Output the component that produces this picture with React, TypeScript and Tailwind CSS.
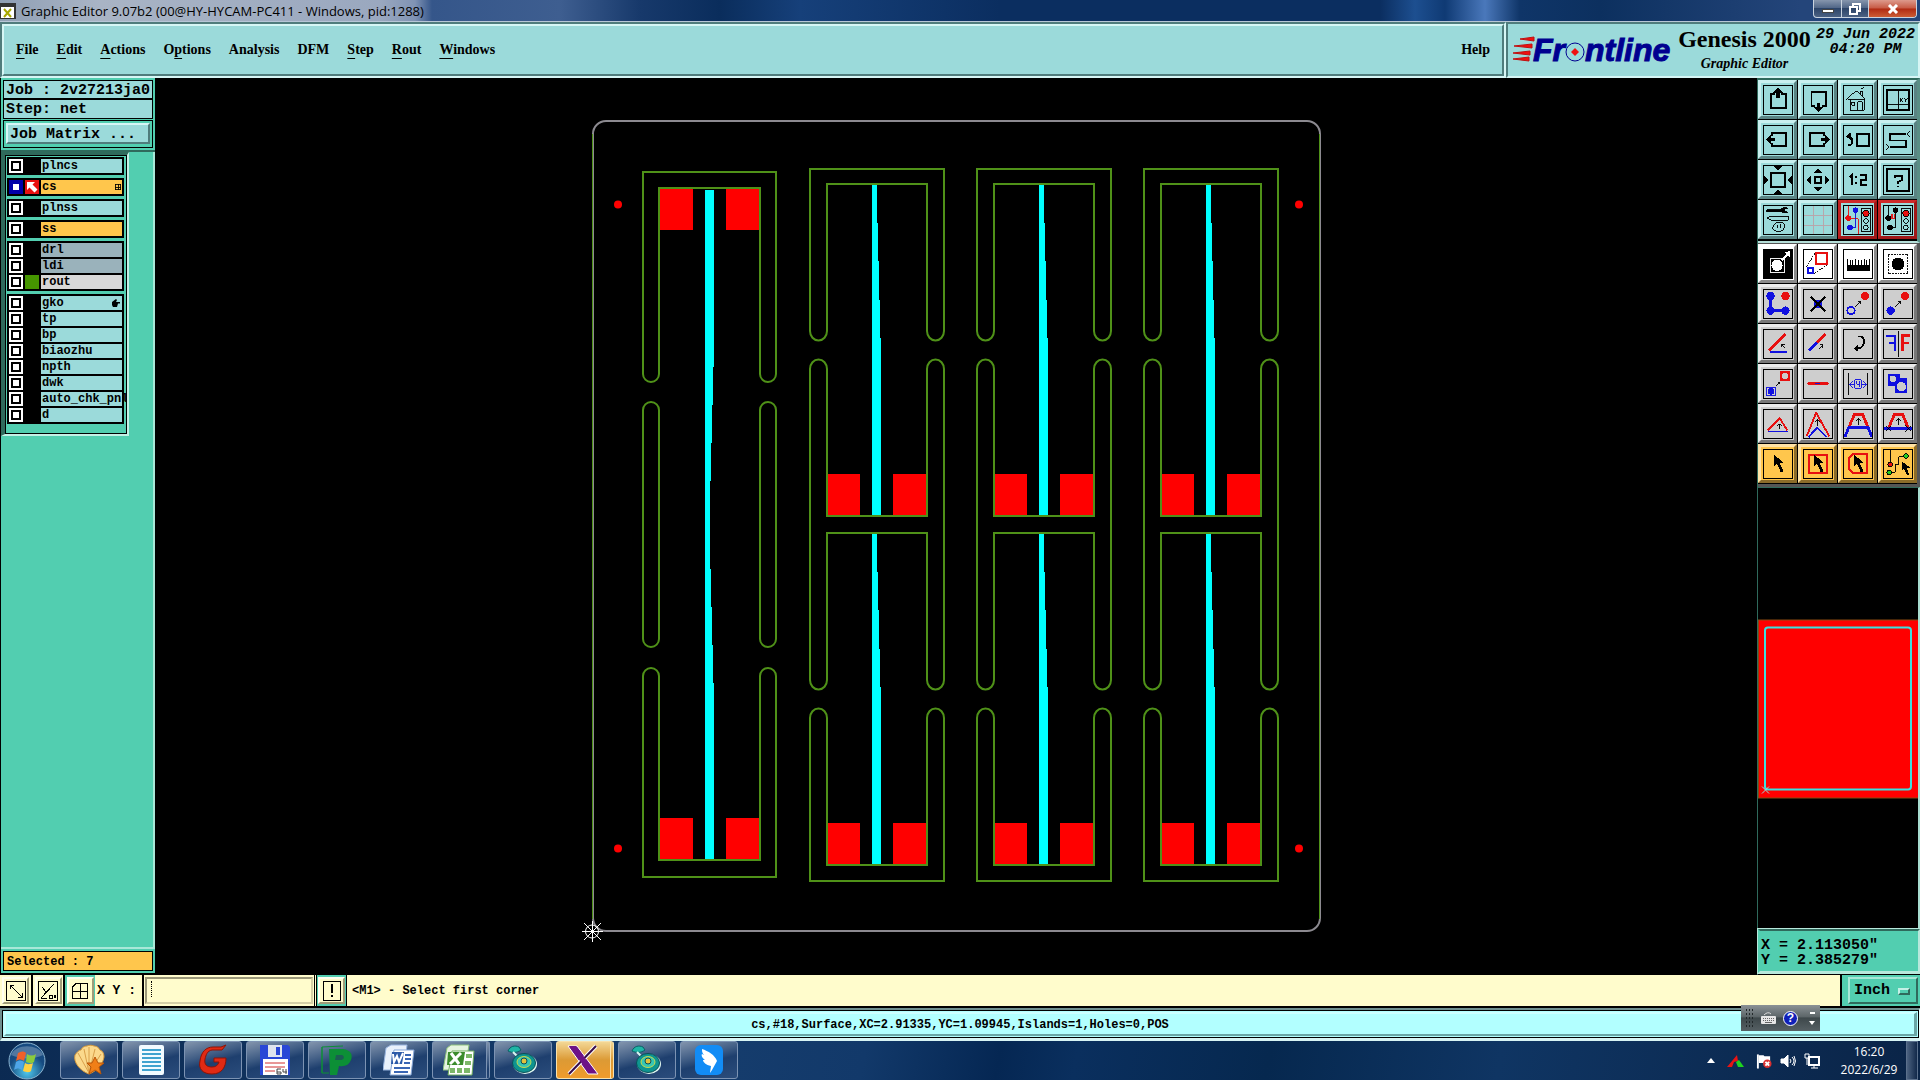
import React from "react";

const MONO = "font-['Liberation_Mono',monospace]";
const SERIF = "font-['Liberation_Serif',serif]";

/* ---------- tool icons, drawn on a 30 x 30 grid ---------- */

const K = "#000";
const R = "#e81010";
const B = "#1010e0";

function Lights() {
  return (
    <>
      <rect x="18.5" y="2.500" width="10" height="25" fill="none" stroke={K} />
      <circle cx="23.500" cy="8" r="3.500" fill={R} stroke={K} />
      <circle cx="23.500" cy="16" r="2.500" fill="none" stroke={K} />
      <circle cx="23.500" cy="23" r="2.500" fill="none" stroke={K} />
    </>
  );
}

const Cursor = () => <path d="M11 5v12l3-2 4 9 3-1-4-9h4z" fill={K} />;

type Tool = { name: string; tone: string; art: React.ReactNode };

const viewTools: Tool[] = [
  { name: "Pan up", tone: "teal", art: <><path d="M12 8.500H7.500v15h16v-15H18" fill="none" stroke={K} strokeWidth="2" /><path d="M15 2l6 6h-4v5h-4V8H9z" /></> },
  { name: "Pan down", tone: "teal", art: <><path d="M12 21.500H8v-15h15.500v15H19" fill="none" stroke={K} strokeWidth="2" /><path d="M15.500 28l6-6h-4v-4h-4v4h-4z" /></> },
  { name: "Home", tone: "teal", art: <path d="M2.500 14.500L13 5l10 9.500M4.500 14.500h18M6.500 14v12h15V14M8.500 17.500h3v3h-3zM14.500 26v-9h5v9M19.500 17v9M17.500 9V5.500h2V11M18 3l3-1" fill="none" stroke={K} /> },
  { name: "Zoom window", tone: "teal", art: <><rect x="3.500" y="4" width="23" height="22" fill="none" stroke={K} strokeWidth="2" /><path d="M15.500 4v22M4 19.500h23" stroke={K} /><path d="M17 13l3 4m0-4l-3 4M22 13l1.500 2L25 13M23.500 15v2" stroke={K} fill="none" /></> },
  { name: "Pan left", tone: "teal", art: <><path d="M9 11V7.500h15v14H9V18" fill="none" stroke={K} strokeWidth="2" /><path d="M2 14.500l6-6v4h4v4H8v4z" /></> },
  { name: "Pan right", tone: "teal", art: <><path d="M21 11V7.500H6v14h15V18" fill="none" stroke={K} strokeWidth="2" /><path d="M28 14.500l-6-6v4h-4v4h4v4z" /></> },
  { name: "Previous view", tone: "teal", art: <><rect x="14" y="8.500" width="12.500" height="13" fill="none" stroke={K} strokeWidth="2" /><path d="M4 20h3c3-1 3-8-2-9" fill="none" stroke={K} strokeWidth="2" /><path d="M2 11l5-4v8z" /></> },
  { name: "Serpentine", tone: "teal", art: <><path d="M24 8.500H6v7h18v7H6" fill="none" stroke={K} strokeWidth="2" /><path d="M28 5l-3 3.500L28 12M2 19l3 3.500L2 26" fill="none" stroke={K} /></> },
  { name: "Zoom in", tone: "teal", art: <><rect x="7.500" y="7.500" width="15" height="15" fill="none" stroke={K} strokeWidth="2" /><path d="M10 0h10l-5 5zM10 30h10l-5-5zM0 10v10l5-5zM30 10v10l-5-5z" /></> },
  { name: "Zoom out", tone: "teal", art: <><rect x="11.500" y="11.500" width="7" height="7" fill="none" stroke={K} strokeWidth="2" /><path d="M10 8h10l-5-5zM10 22h10l-5 5zM8 10v10l-5-5zM22 10v10l5-5z" /></> },
  { name: "Scale 1:2", tone: "teal", art: <path d="M6 12l3-3v11M12 12h2M12 18h2M17 10h7v5h-6v5h7" fill="none" stroke={K} strokeWidth="2" /> },
  { name: "Query", tone: "teal", art: <><rect x="3.500" y="3.500" width="23" height="23" fill="none" stroke={K} strokeWidth="2" /><path d="M12 13v-2h7v4l-4 2v2M15 21v2" fill="none" stroke={K} strokeWidth="2" /></> },
  { name: "Settings", tone: "teal", art: <><path d="M3 4h15v2H3zM18 3l3-1h4v1h-3v3h3v1h-4l-3-1z" stroke={K} /><path d="M3 13l4-2h19v4H7z" fill="none" stroke={K} /><path d="M10 21c3-5 11-4 12-1 1 5-4 8-8 7-5-1-5-3-4-6zM14 20v4M18 19l-1 5" fill="none" stroke={K} /></> },
  { name: "Grid", tone: "teal", art: <path d="M10.500 0v30M20.500 0v30M0 10.500h30M0 20.500h30" stroke="#b9a3a8" /> },
  { name: "Snap nets", tone: "alert", art: <><path d="M4.500 0v13M4 13.500h11v16" stroke={R} fill="none" /><circle cx="4.500" cy="13" r="3" fill={R} /><path d="M12.500 4v19H7" fill="none" stroke={B} /><circle cx="6.500" cy="23" r="3" fill={B} /><circle cx="12.500" cy="4.500" r="3" fill={B} /><Lights /></> },
  { name: "Snap pads", tone: "alert", art: <><path d="M4.500 0v13M12.500 4v19H7" fill="none" stroke={K} /><circle cx="4.500" cy="13" r="3" /><circle cx="6.500" cy="23" r="3" /><circle cx="12.500" cy="4.500" r="3" /><path d="M7 13.500h5M7.500 9v4M9.500 9v4M11.500 9v4" stroke={R} /><Lights /></> },
];

const editTools: Tool[] = [
  { name: "Transform", tone: "white", art: <><rect width="30" height="30" /><rect x="6.500" y="9.500" width="15" height="15" fill="none" stroke="#fff" /><circle cx="14" cy="16.500" r="6" fill="#fff" /><path d="M18 10l6-6-3-1 7-2v7l-2-2-6 6z" fill="#fff" /></> },
  { name: "Resize", tone: "white", art: <><rect x="13" y="3" width="12" height="12" fill="none" stroke={R} strokeWidth="2" /><rect x="4" y="19" width="6" height="6" fill="none" stroke={B} strokeWidth="2" /><path d="M3 18L12 3M11 25l14-9" stroke={K} strokeDasharray="2 1" /></> },
  { name: "Measure", tone: "white", art: <path d="M3 10h1v6h2v-5h1v5h2v-5h1v5h2v-6h1v6h2v-5h1v5h2v-5h1v5h2v-6h1v6h2v-5h1v5h2v-6h1v12H3z" /> },
  { name: "Pad", tone: "white", art: <><rect x="4.500" y="4.500" width="21" height="21" fill="none" stroke={K} strokeDasharray="2 1" /><circle cx="15" cy="15" r="7" /></> },
  { name: "Connect", tone: "gray", art: <><path d="M7 6v16h17" stroke={B} strokeWidth="3" fill="none" /><circle cx="7" cy="6.500" r="4.500" fill={B} /><circle cx="7" cy="22" r="4.500" fill={B} /><circle cx="23" cy="22" r="4.500" fill={B} /><circle cx="23" cy="6.500" r="4.500" fill={R} /></> },
  { name: "Delete", tone: "gray", art: <><circle cx="15" cy="15" r="4.500" fill={B} /><path d="M7 7l16 16M23 7L7 23" stroke={K} strokeWidth="2" /></> },
  { name: "Move pad", tone: "gray", art: <><circle cx="7.500" cy="22" r="4" fill="none" stroke={B} strokeWidth="2" /><circle cx="22.500" cy="6.500" r="4.500" fill={R} /><path d="M12 18l6-6M15 12h3v3" stroke={K} fill="none" /></> },
  { name: "Copy pad", tone: "gray", art: <><circle cx="7" cy="22" r="4.500" fill={B} /><circle cx="22.500" cy="6.500" r="4.500" fill={R} /><path d="M12 18l6-6M15 12h3v3" stroke={K} fill="none" /></> },
  { name: "Angle", tone: "gray", art: <><path d="M5 22L23 4" stroke={R} strokeWidth="3" /><path d="M6 24h19" stroke={B} strokeWidth="2" /><path d="M22 19l-3-4M19 18v-3h3" stroke={K} fill="none" /></> },
  { name: "Line", tone: "gray", art: <><path d="M5 22l9-9" stroke={B} strokeWidth="3" /><path d="M14 13l9-9" stroke={R} strokeWidth="3" /><path d="M16 20l4-4M17 16h3v3" stroke={K} fill="none" /></> },
  { name: "Rotate", tone: "gray", art: <><path d="M15 7h3c5 2 5 11-3 13h-3" fill="none" stroke={K} strokeWidth="2" /><path d="M10 20l5-4v7z" /></> },
  { name: "Mirror", tone: "gray", art: <><path d="M15.500 1v28" stroke={K} /><path d="M2 6h10v17M12 14H5" fill="none" stroke={B} strokeWidth="2" /><path d="M28 6h-8v17M20 14h7" fill="none" stroke={R} strokeWidth="3" /></> },
  { name: "Substitute", tone: "gray", art: <><rect x="2.500" y="18.500" width="10" height="9" fill="none" stroke={B} /><circle cx="7.500" cy="23" r="3.500" fill={B} /><rect x="17" y="1" width="11" height="11" fill={R} /><circle cx="22.500" cy="6.500" r="3.500" fill="#ccc" /><path d="M13 17l4-4M14.500 13H17v2.500" stroke={K} fill="none" /></> },
  { name: "Break", tone: "gray", art: <><path d="M5 14.500h20" stroke={R} strokeWidth="3" strokeLinecap="round" /><path d="M12 14.500h5" stroke={B} strokeWidth="2" /></> },
  { name: "Stretch", tone: "gray", art: <><path d="M4.500 3v24M25.500 3v24" stroke={K} /><path d="M6 15.500h5M19 15.500h5M9 12l-3 3.500L9 19M21 12l3 3.500L21 19M11.500 10.500h7v9h-7zM13.500 12v3.500h3M16.500 12v6" stroke={B} fill="none" /></> },
  { name: "Merge", tone: "gray", art: <><path d="M4 4h13v5h8v16H12v-8H4z" fill={B} /><circle cx="9.500" cy="9.500" r="3.500" fill="#ccc" /><circle cx="18.500" cy="18" r="5" fill="#ccc" /></> },
  { name: "Chamfer", tone: "gray", art: <><path d="M4 22L17 9l8 13" fill="none" stroke={R} strokeWidth="2" /><path d="M4 23h22" stroke={B} strokeWidth="2" /><path d="M16.500 20v-5M14 17l2.500-2 2.500 2" stroke={K} fill="none" /></> },
  { name: "Peak", tone: "gray", art: <><path d="M3 28L13 3l14 25" fill="none" stroke={R} strokeWidth="2" /><path d="M5 29l9-10 10 10" fill="none" stroke={B} strokeWidth="2" /><path d="M14.500 17v-6M12 13l2.500-3 2.500 3" stroke={K} fill="none" /></> },
  { name: "Trapezoid", tone: "gray", art: <><path d="M5 19l6-14h9l6 14" fill="none" stroke={R} strokeWidth="3" /><path d="M1 29l4-10h21l4 10" fill="none" stroke={B} strokeWidth="3" /><path d="M15.500 16v-6M13 12l2.500-3 2.500 3" stroke={K} fill="none" /></> },
  { name: "Trim", tone: "gray", art: <><path d="M5 19l6-14h9l6 14" fill="none" stroke={R} strokeWidth="3" /><path d="M0 20h30" stroke={B} strokeWidth="3" /><path d="M15.500 16v-6M13 12l2.500-3 2.500 3M2 17l6 6m0-6l-6 6M23 17l6 6m0-6l-6 6" stroke={K} fill="none" /></> },
  { name: "Select", tone: "gold", art: <Cursor /> },
  { name: "Select rectangle", tone: "gold", art: <><rect x="5" y="5" width="20" height="20" fill="none" stroke={R} strokeWidth="2" /><Cursor /></> },
  { name: "Select polygon", tone: "gold", art: <><path d="M10 4h15v21H10l-5-5V9z" fill="none" stroke={R} strokeWidth="2" /><Cursor /></> },
  { name: "Select net", tone: "gold", art: <><path d="M6.500 0v14M6 24h6v-9h4V7h6" fill="none" stroke={K} /><circle cx="6.500" cy="15.500" r="2.500" fill={R} stroke={K} /><circle cx="5.500" cy="24" r="2.500" fill="#2c2" stroke={K} /><circle cx="23.500" cy="6.500" r="2.500" fill="#2c2" stroke={K} /><path d="M19 12v10l2-2 4 7 2-1-3-7h4z" /></> },
];

const tones: Record<string, string> = {
  teal: "bg-[#9bdada] border-t-[#c9efef] border-l-[#c9efef] border-b-[#5a8383] border-r-[#5a8383]",
  alert: "bg-[#9bdada] border-t-[#d02a2a] border-l-[#c02020] border-b-[#a01818] border-r-[#a01818]",
  white: "bg-white border-t-white border-l-white border-b-[#8a8a8a] border-r-[#8a8a8a]",
  gray: "bg-[#cecece] border-t-[#ececec] border-l-[#ececec] border-b-[#777] border-r-[#777]",
  gold: "bg-[#ffc64c] border-t-[#ffe3a6] border-l-[#ffe3a6] border-b-[#8c6c2a] border-r-[#8c6c2a]",
};

function ToolButton({ tool }: { tool: Tool }) {
  return (
    <button aria-label={tool.name} className={`flex size-[39px] items-center justify-center border-3 ${tones[tool.tone]}`}>
      <svg viewBox="0 0 30 30" className="size-[30px] border border-black" shapeRendering="crispEdges">
        {tool.art}
      </svg>
    </button>
  );
}

/* ---------- layer list ---------- */

type Layer = { name: string; bg?: string; swatch?: string; active?: boolean; mark?: "grid" | "hand" };

const layerGroups: Layer[][] = [
  [{ name: "plncs" }],
  [{ name: "cs", bg: "bg-[#ffc64c]", swatch: "bg-[#e81010]", active: true, mark: "grid" }],
  [{ name: "plnss" }],
  [{ name: "ss", bg: "bg-[#ffc64c]" }],
  [{ name: "drl", bg: "bg-[#9ab2bb]" }, { name: "ldi", bg: "bg-[#9ab2bb]" }, { name: "rout", bg: "bg-[#d8d8d8]", swatch: "bg-[#469600]" }],
  [{ name: "gko", mark: "hand" }, { name: "tp" }, { name: "bp" }, { name: "biaozhu" }, { name: "npth" }, { name: "dwk" }, { name: "auto_chk_pnl" }, { name: "d" }],
];

function LayerRow({ layer }: { layer: Layer }) {
  return (
    <li className="flex h-[14px] items-center gap-[2px]">
      <input
        id={`layer-${layer.name}`}
        type="checkbox"
        defaultChecked={layer.active}
        className={`size-[14px] shrink-0 appearance-none border-2 bg-white ${layer.active ? "border-[#0000a8] shadow-[inset_0_0_0_2px_#0000a8]" : "border-white shadow-[inset_0_0_0_2px_#000]"}`}
      />
      <span className={`flex size-[14px] shrink-0 items-center justify-center ${layer.swatch ?? "bg-black"}`}>
        {layer.active && (
          <svg viewBox="0 0 14 14" className="size-[14px]">
            <path d="M2 2h8L7.500 4.500l5 5-3 3-5-5L2 10z" fill="#fff" />
          </svg>
        )}
      </span>
      <label
        htmlFor={`layer-${layer.name}`}
        className={`flex h-[14px] flex-1 items-center justify-between whitespace-nowrap pl-px text-xs/[14px] font-bold ${layer.bg ?? "bg-[#9bdada]"}`}
      >
        <span className="w-0">{layer.name}</span>
        {layer.mark === "grid" && (
          <svg viewBox="0 0 7 7" className="mr-px size-[6px]" shapeRendering="crispEdges">
            <path d="M0 .5h7M0 3.500h7M0 6.500h7M.5 0v7M3.500 0v7M6.500 0v7" stroke="#000" />
          </svg>
        )}
        {layer.mark === "hand" && (
          <svg viewBox="0 0 8 8" className="mr-[2px] size-2">
            <path d="M0 3l4-3 1 1-1 2h4v1.500H6L5 8H1L0 6z" />
          </svg>
        )}
      </label>
    </li>
  );
}

/* ---------- board drawing ---------- */

function Slot({ x, w, top, bottom }: { x: number; w: number; top: number; bottom: number }) {
  return <rect x={x} y={top} width={w} height={bottom - top} rx={w / 2} />;
}

function steps(x: number, rows: [number, number, number][]) {
  return rows.map(([y0, y1, w]) => <rect key={y0} x={x} y={y0} width={w} height={y1 - y0} />);
}

function taper(y: number, end: number): [number, number, number][] {
  return [[y, y + 39, 5], [y + 39, y + 77, 6], [y + 77, y + 116, 7], [y + 116, y + 154, 8], [y + 154, end, 9]];
}

function DoublePanel({ x }: { x: number }) {
  return (
    <>
      <g fill="#f00">
        <rect x={x + 16} y="474" width="34" height="42" />
        <rect x={x + 83} y="474" width="34" height="42" />
        <rect x={x + 16} y="823" width="34" height="42" />
        <rect x={x + 83} y="823" width="34" height="42" />
      </g>
      <g fill="#0ff" shapeRendering="crispEdges">
        {steps(x + 62, taper(184, 515))}
        {steps(x + 62, taper(533, 864))}
      </g>
      <g fill="none" stroke="#4f9118" strokeWidth="2">
        <path d={`M${x} 169H${x + 134}V331a8 9 0 0 1-17 0V184H${x + 17}V331a8 9 0 0 1-17 0Z`} />
        <path d={`M${x} 369a8 9 0 0 1 17 0V516H${x + 117}V369a8 9 0 0 1 17 0V680a8 9 0 0 1-17 0V533H${x + 17}V680a8 9 0 0 1-17 0Z`} />
        <path d={`M${x} 881H${x + 134}V718a8 9 0 0 0-17 0V865H${x + 17}V718a8 9 0 0 0-17 0Z`} />
      </g>
    </>
  );
}

function Board() {
  return (
    <svg viewBox="155 78 1602 897" className="min-h-0 min-w-0 flex-1 bg-black" role="img" aria-label="Board layout">
      <g fill="#f00">
        <circle cx="618" cy="204.500" r="4" />
        <circle cx="618" cy="848.500" r="4" />
        <circle cx="1299" cy="204.500" r="4" />
        <circle cx="1299" cy="848.500" r="4" />
        <rect x="659" y="188" width="34" height="42" />
        <rect x="726" y="188" width="34" height="42" />
        <rect x="659" y="818" width="34" height="42" />
        <rect x="726" y="818" width="34" height="42" />
      </g>
      <g fill="#0ff" shapeRendering="crispEdges">
        {steps(705, [[190, 367, 9], [367, 405, 8], [405, 443, 7], [443, 481, 6], [481, 569, 5], [569, 607, 6], [607, 645, 7], [645, 683, 8], [683, 859, 9]])}
      </g>
      <g fill="none" stroke="#4f9118" strokeWidth="2">
        <path d="M643 172H776V374a8 8 0 0 1-16 0V188H659V374a8 8 0 0 1-16 0Z" />
        <Slot x={643} w={16} top={402} bottom={647} />
        <Slot x={760} w={16} top={402} bottom={647} />
        <path d="M643 877H776V676a8 8 0 0 0-16 0V860H659V676a8 8 0 0 0-16 0Z" />
      </g>
      <DoublePanel x={810} />
      <DoublePanel x={977} />
      <DoublePanel x={1144} />
      <g fill="none">
        <rect x="593" y="121" width="727" height="810" rx="13" stroke="#8c8a90" strokeWidth="2" />
        <path d="M592.500 134v785M1319.500 134v785" stroke="#4f9118" />
        <circle cx="592" cy="931.500" r="6.500" stroke="#fff" />
        <path d="M592.500 921v21M582 931.500h21M584 923l17 17M601 923l-17 17" stroke="#fff" />
      </g>
    </svg>
  );
}

/* ---------- taskbar ---------- */

const Radar = () => (
  <>
    <path d="M1 7c2-5 7-6 11-4l2 3c-4 3-9 3-13 1z" fill="#1fb5a5" stroke="#0a5f66" />
    <path d="M6 8l7 7" stroke="#d8f6f0" strokeWidth="2" />
    <ellipse cx="18" cy="20" rx="12" ry="10" fill="#dff7ef" />
    <ellipse cx="17" cy="19" rx="11.500" ry="9.500" fill="#0e9590" stroke="#0a4f58" />
    <ellipse cx="17" cy="18" rx="7" ry="5.500" fill="#35c7b4" stroke="#c8d94a" />
    <circle cx="17" cy="17" r="3" fill="#e0c13c" stroke="#0a4f58" />
  </>
);

const apps: { name: string; art: React.ReactNode; stacked?: boolean; active?: boolean }[] = [
  { name: "Shell", art: <><path d="M16 30C7 27 0 18 2 11 4 8 6 6 8 6c1-3 4-4 6-4 2-1 5-1 7 0 3 0 5 2 6 4 3 1 4 4 4 7-1 7-7 14-15 17z" fill="#fbd98c" stroke="#d79a3c" /><path d="M16 29L5 9M16 29L11 5M16 29V3M16 29L22 5M16 29l12-19" stroke="#d9a04a" /><path d="M22 13l3 6h6l-5 4 2 7-6-4-6 4 2-7-4-4h5z" fill="#f07f17" stroke="#b85508" /></> },
  { name: "Notes", art: <><rect x="4" y="1" width="25" height="30" rx="2" fill="#f2fbff" /><path d="M7 6h19M7 10h19M7 14h19M7 18h19M7 22h19M7 26h19" stroke="#3fa3cf" strokeWidth="2" /></> },
  { name: "G", art: <path d="M29 1l-4 5H15c-5 1-6 5-7 9-1 6 2 8 7 8 4 0 6-2 7-5h-5v-4h12c0 9-4 16-14 16C6 30 1 25 3 17 4 8 9 3 16 3h8z" fill="#e02a14" stroke="#8f1206" /> },
  { name: "Save", art: <><path d="M1 1h28l2 2v28H1z" fill="#2947d6" /><rect x="9" y="1" width="14" height="12" fill="#dfe4ee" /><rect x="17" y="3" width="4" height="8" fill="#2947d6" /><rect x="4" y="15" width="25" height="16" fill="#fff" /><path d="M6 19h20M6 23h20M6 27h10" stroke="#d03030" /><path d="M22 25h-4v5h4v-2h-4M24 25v3h4M27 25v5" stroke="#444" fill="none" /></> },
  { name: "P", art: <><path d="M8 5h14c8 1 10 6 8 11-2 5-6 7-12 6l-2 9H9z" fill="#0c8f36" /><path d="M1 29V3L22 2M1 3v26h7" fill="none" stroke="#0c8f36" /><path d="M15 11h6c3 1 2 5-1 5h-6z" fill="#1b5c53" /></> },
  { name: "Word", art: <><path d="M3 4l5-3h16l-3 25H0z" fill="#e9f1fb" stroke="#98b4de" /><path d="M11 6h20l-3 25H7z" fill="#fff" stroke="#86a6d6" /><path d="M9 8h12l-2 12H8z" fill="#2c5aa8" /><path d="M10 10l1 8 3-6 2 6 4-9" stroke="#fff" strokeWidth="2" fill="none" /><path d="M22 11h6M22 15h6M21 19h6M11 24h16M11 28h14" stroke="#3a66b4" strokeWidth="2" /></> },
  { name: "Excel", stacked: true, art: <><path d="M4 4l4-3h18l-4 25H0z" fill="#e6f4e1" stroke="#8fc27e" /><path d="M9 7h22l-2 24H5z" fill="#fff" stroke="#6fae5c" /><path d="M5 8h17l-2 13H4z" fill="#3b8c2c" /><path d="M8 9l8 11M18 9L7 20" stroke="#fff" strokeWidth="3" /><path d="M23 10h6v4h-6zM22 17h6v4h-6zM21 24h6v5h-6zM14 24h5v5h-5zM7 24h5v5H7z" fill="#7cb768" /></> },
  { name: "Radar", art: <Radar /> },
  { name: "X", active: true, stacked: true, art: <><path d="M1 2h9l21 28H21z" fill="#6d1287" stroke="#fff" /><path d="M29 2L2 30" stroke="#fff" strokeWidth="4" /><path d="M29 2L2 30" stroke="#3a0d4a" strokeWidth="2" /><path d="M2 2h7l20 27h-7z" fill="#6d1287" /></> },
  { name: "Radar 2", art: <Radar /> },
  { name: "Wing", art: <><rect x="2" y="1" width="28" height="30" rx="6" fill="#128cf5" /><path d="M9 5c6 2 13 6 15 12l-5 9-2 3 1-7c-5-1-8-4-8-6l2 0c-3-2-4-5-3-6l2 1c-2-2-2-4-2-6z" fill="#fff" /></> },
];

function Taskbar() {
  return (
    <footer className="flex h-[39px] shrink-0 items-stretch bg-[linear-gradient(100deg,#0b2a52_0%,#163d6d_36%,#12396a_45%,#052753_52%,#0a2f5e_56%,#06284f_66%,#0f3563_78%,#0a2447_100%)] font-['Open_Sans',sans-serif] text-white">
      <button aria-label="Start" className="mr-[6px] flex w-[54px] items-center justify-center">
        <svg viewBox="0 0 38 38" className="size-[38px]">
          <defs>
            <radialGradient id="orb" cy=".8">
              <stop offset="0" stopColor="#4fc9ee" />
              <stop offset="1" stopColor="#164a80" />
            </radialGradient>
          </defs>
          <circle cx="19" cy="19" r="18" fill="url(#orb)" stroke="#8bb4d0" />
          <path d="M3 13C7 2 30 1 35 13c-10 5-22 4-32 0z" fill="#fff" opacity=".25" />
          <path d="M10 11c3-2 6-2 8 0l-2 8c-3-2-5-2-8 0z" fill="#f0602a" />
          <path d="M19 12c3 2 6 2 9 0l-2 8c-3 2-5 1-8 0z" fill="#8bcb3c" />
          <path d="M8 20c3-2 5-2 8 0l-2 8c-3-2-5-2-8 0z" fill="#4ea5e8" />
          <path d="M17 21c3 2 6 1 8 0l-2 8c-2 2-5 1-8 0z" fill="#ffd040" />
        </svg>
      </button>
      <div className="flex gap-1">
        {apps.map((app) => (
          <button
            key={app.name}
            aria-label={app.name}
            className={`flex h-[38px] w-[58px] items-center justify-center rounded-[3px] border ${
              app.active
                ? "border-[#f8e2ae] bg-[linear-gradient(#f3d795,#dc9a35_50%,#ef9b2c)]"
                : "border-[#7c93b3] bg-[linear-gradient(165deg,#8395ad_0%,#3f5c84_38%,#1e3f6e_55%,#2b4d7c)]"
            } ${app.stacked ? "border-r-4 border-double pr-px" : ""}`}
          >
            <svg viewBox="0 0 32 32" className="size-8">{app.art}</svg>
          </button>
        ))}
      </div>
      <div className="ml-auto flex items-center gap-2">
        <button aria-label="Show hidden icons" className="mr-1">
          <svg viewBox="0 0 8 5" className="h-[5px] w-2"><path d="M4 0l4 5H0z" fill="#fff" /></svg>
        </button>
        <svg viewBox="0 0 17 14" className="mr-1 h-[14px] w-[17px]">
          <path d="M0 13L10 1l1 6-4 1-2 5z" fill="#e81414" /><path d="M9 8l3-2 5 7h-6z" fill="#1ed41e" />
        </svg>
        <svg viewBox="0 0 17 16" className="size-4">
          <path d="M2 1v15" stroke="#fff" strokeWidth="2" /><path d="M3 2h5l1 1h6v7H3z" fill="#fff" />
          <circle cx="12" cy="11" r="4.500" fill="#d93030" /><path d="M10 9l4 4m0-4l-4 4" stroke="#fff" strokeWidth="2" />
        </svg>
        <svg viewBox="0 0 16 16" className="size-4" fill="none" stroke="#fff">
          <path d="M1 6h3l4-4v12l-4-4H1z" fill="#fff" /><path d="M10 6q2 2 0 4M12 4q4 4 0 8M14 3q3 5 0 10" />
        </svg>
        <svg viewBox="0 0 16 16" className="size-4" fill="none" stroke="#fff">
          <path d="M5 4h10v8H5z" strokeWidth="2" /><path d="M7 15h7M10 12v3M1 1v4h4V1M3 5v7M2 0v2M4 0v2" />
        </svg>
        <time className="ml-1 w-[74px] text-center text-xs/[18px]">
          16:20
          <br />
          2022/6/29
        </time>
      </div>
      <button aria-label="Show desktop" className="mr-[2px] w-3 border border-[#5b708c] bg-[linear-gradient(90deg,#4c6280,#12294a)]" />
    </footer>
  );
}

/* ---------- header ---------- */

const menus: [string, string, string][] = [
  ["", "F", "ile"], ["", "E", "dit"], ["", "A", "ctions"], ["O", "p", "tions"], ["Analysis", "", ""],
  ["DFM", "", ""], ["", "S", "tep"], ["", "R", "out"], ["", "W", "indows"],
];

function TitleBar() {
  return (
    <header className="flex h-[22px] shrink-0 items-center border-b border-[#b8c6d6] bg-[linear-gradient(90deg,#8f9fb4_0px,#a9b4c5_100px,#9aa8bf_380px,#8093b4_415px,#35568a_432px,#3e5e90_560px,#17396b_640px,#0a2d5c_720px,#16407a_800px,#0b2e60_1000px,#0b2e60_1380px,#1d4f90_1415px,#0f3a74_1445px,#4a78bb_1485px,#0f3568_1520px,#0c305f_1600px,#24457a_1800px)] font-['Open_Sans',sans-serif]">
      <svg viewBox="0 0 16 16" className="size-4">
        <rect width="16" height="16" fill="#333" /><rect x="1" y="4" width="13" height="11" fill="#fff" /><path d="M4 6l7 8M11 6l-7 8" stroke="#a8a800" strokeWidth="2" />
      </svg>
      <h1 className="ml-[5px] text-[13px]/[20px]">Graphic Editor 9.07b2 (00@HY-HYCAM-PC411 - Windows, pid:1288)</h1>
      <div className="mr-[3px] ml-auto flex h-[18px] self-start overflow-hidden rounded-b border border-t-0 border-[#c9d3df] bg-[linear-gradient(#8696ad,#4c6284_50%,#2c4468_50%,#4b6183)]">
        <button aria-label="Minimize" className="flex w-[28px] items-center justify-center border-r border-[#c9d3df]">
          <span className="mt-1 h-[4px] w-[12px] border border-[#444] bg-white" />
        </button>
        <button aria-label="Restore" className="flex w-[27px] items-center justify-center border-r border-[#c9d3df]">
          <svg viewBox="0 0 12 12" className="size-3" fill="none" stroke="#fff" strokeWidth="2"><path d="M4 3V1h7v7H9M1 4h7v7H1z" /></svg>
        </button>
        <button aria-label="Close" className="flex w-[47px] items-center justify-center bg-[linear-gradient(#dd9a8c,#c75a44_48%,#b02a12_52%,#cc5c34)]">
          <svg viewBox="0 0 12 10" className="h-[10px] w-3"><path d="M2 1l8 8M10 1L2 9" stroke="#fff" strokeWidth="3" /></svg>
        </button>
      </div>
    </header>
  );
}

const sunkFrame = "border-2 border-t-[#4f7c7c] border-l-[#4f7c7c] border-b-[#d6f6f5] border-r-[#d6f6f5]";
const raisedFrame = "border-2 border-t-[#d6f6f5] border-l-[#d6f6f5] border-b-[#4f7c7c] border-r-[#4f7c7c]";

function MenuArea() {
  return (
    <div className={`flex h-14 shrink-0 bg-[#9bdada] ${SERIF}`}>
      <nav className={`flex-1 ${sunkFrame}`}>
        <div className={`flex h-full items-center gap-[18px] px-3 text-sm font-bold ${raisedFrame}`}>
          {menus.map(([a, u, b]) => (
            <button key={a + u + b} className="leading-5">
              {a}
              {u && <u className="underline-offset-4">{u}</u>}
              {b}
            </button>
          ))}
          <button className="ml-auto">Help</button>
        </div>
      </nav>
      <section className={`flex w-[414px] pl-1 ${sunkFrame}`}>
        <svg viewBox="1512 26 160 50" className="mt-[2px] h-[50px] w-[160px]">
          <g fill="#f01010" stroke="#c01010">
            <path d="M1520 39l14-2v4zM1514 46l18-2v4zM1513 53l17-2v4zM1513 59l16-2v4z" />
          </g>
          <g className="font-['Liberation_Sans',sans-serif] text-[32px] font-bold italic" fill="#000090" stroke="#000090">
            <text x="1533" y="61">Fr</text>
            <text x="1585" y="61">ntline</text>
          </g>
          <circle cx="1575" cy="52" r="9" fill="none" stroke="#000090" />
          <path d="M1575 48l4 4-4 4-4-4z" fill="#f01010" />
        </svg>
        <div className="flex w-[141px] flex-col items-center pt-px pl-1 font-bold whitespace-nowrap">
          <span className="text-2xl/[28px]">Genesis 2000</span>
          <span className="text-sm/[22px] italic">Graphic Editor</span>
        </div>
        <time className={`flex-1 pt-[3px] text-center text-[15px]/[15px] font-bold whitespace-nowrap italic ${MONO}`}>
          29 Jun 2022
          <br />
          04:20 PM
        </time>
      </section>
    </div>
  );
}

/* ---------- side panels ---------- */

function LeftPanel() {
  return (
    <aside className={`mb-[2px] flex w-[155px] shrink-0 flex-col border-l border-black bg-[#52ceb0] ${MONO}`}>
      <div className="flex flex-col gap-px border-b-2 border-b-[#2f6a5c] p-[2px] text-[15px]/[20px] font-bold">
        <div className="border border-black bg-[#9bdada]">
          <p className="h-[19px] border-b-2 border-black pl-[2px] whitespace-nowrap">Job : 2v27213ja0</p>
          <p className="h-[18px] pl-[2px]">Step: net</p>
        </div>
        <div className="border border-black p-[2px]">
          <button className="h-[21px] w-full border-2 border-t-[#d6f6f5] border-r-[#4f7c7c] border-b-[#4f7c7c] border-l-[#d6f6f5] bg-[#9bdada] pl-[2px] text-left">
            Job Matrix ...
          </button>
        </div>
      </div>
      <div className="flex flex-1 items-start border-r-2 border-b-2 border-[#a8e8d8]">
        <div className="border-4 border-t-3 border-r-2 border-b-2 border-t-[#2f6a5c] border-r-[#c4f0e6] border-b-[#c4f0e6] border-l-[#2f6a5c]">
          <div className="flex w-[122px] flex-col gap-[3px] overflow-hidden border border-black px-px pt-px pb-[9px]">
            {layerGroups.map((group) => (
              <ul key={group[0].name} className="flex w-[117px] flex-col gap-[2px] bg-black p-[2px]">
                {group.map((layer) => (
                  <LayerRow key={layer.name} layer={layer} />
                ))}
              </ul>
            ))}
          </div>
        </div>
      </div>
      <p className="m-[2px] h-5 border border-black bg-[#ffc64c] pl-[3px] text-xs/[20px] font-bold">Selected : 7</p>
    </aside>
  );
}

function RightPanel() {
  return (
    <aside className="flex w-[163px] shrink-0 flex-col border-l border-[#2f6a5c] bg-black">
      <div className="grid grid-cols-[repeat(4,39px)] gap-px border-t-2 border-r-3 border-b-2 border-t-[#2f6a5c] border-r-[#5a8f86] border-b-[#b5ded8] pb-[2px]">
        {viewTools.map((t) => <ToolButton key={t.name} tool={t} />)}
      </div>
      <div className="grid grid-cols-[repeat(4,39px)] gap-px border-t border-r-3 border-b-3 border-[#555] pb-px">
        {editTools.map((t) => <ToolButton key={t.name} tool={t} />)}
      </div>
      <div className="flex min-h-0 flex-1 border-t border-r-2 border-t-[#2f6a5c] border-r-[#a8dcd0]">
        <svg viewBox="1758 488 160 440" className="w-full" role="img" aria-label="Overview">
          <rect x="1758.500" y="619.500" width="160" height="178" fill="#f00" stroke="#8a4a10" />
          <rect x="1765" y="627" width="146" height="162" rx="3" fill="none" stroke="#3ce0e0" strokeWidth="2" />
          <path d="M1762 786l7 7m0-7l-7 7" stroke="#9dd" />
        </svg>
      </div>
      <div className={`mb-[2px] h-[44px] border-2 border-t-[#2f6a5c] border-r-[#b8e8dc] border-b-[#b8e8dc] border-l-[#52ceb0] bg-[#52ceb0] pt-[7px] pl-px text-[15px]/[15px] font-bold whitespace-pre outline-1 outline-[#b8e8dc] ${MONO}`}>
        <p>X = 2.113050"</p>
        <p>Y = 2.385279"</p>
      </div>
    </aside>
  );
}

/* ---------- bottom bars ---------- */

const creamBevel = "flex size-[27px] items-center justify-center border-2 border-t-[#fffff0] border-l-[#fffff0] border-b-[#a09c78] border-r-[#a09c78] bg-[#fffccc]";

function CommandBar() {
  return (
    <form className={`flex h-[33px] shrink-0 items-stretch border-b-2 border-black bg-[#fffccc] text-xs font-bold ${MONO}`}>
      <div className="flex w-[33px] items-center justify-center border-r-2 border-black">
        <button type="button" aria-label="Corner mode" className={creamBevel}>
          <svg viewBox="0 0 20 20" className="size-5" fill="none" stroke="#000" shapeRendering="crispEdges">
            <path d="M.5.500h19v19H.5zM4 4l12 12M4 8V4h4M16 12v4h-4" />
          </svg>
        </button>
      </div>
      <div className="flex w-8 items-center justify-center border-r-2 border-black">
        <button type="button" aria-label="Angle mode" className={creamBevel}>
          <svg viewBox="0 0 20 20" className="size-5" fill="none" stroke="#000" shapeRendering="crispEdges">
            <path d="M.5.500h19v19H.5zM3 17L16 3M3 17h6M4 6l4 5M11 14h3v3h-3zM16 14l2 3m0-3l-2 3" />
          </svg>
        </button>
      </div>
      <div className="flex w-[30px] items-center justify-center bg-[#52ceb0]">
        <button type="button" aria-label="Grid mode" className={creamBevel}>
          <svg viewBox="0 0 20 20" className="size-5" fill="none" stroke="#000" shapeRendering="crispEdges">
            <path d="M6 2.500h11.500v15h-15V6zM10.500 2v15M2 10.500h16" />
          </svg>
        </button>
      </div>
      <label htmlFor="xy" className="w-[47px] self-center pt-px pl-[2px] text-[13px] whitespace-nowrap">X Y :</label>
      <div className="relative flex w-[173px] border-x border-l-2 border-black px-px py-[2px]">
        <input
          id="xy"
          className="w-full border-2 border-t-[#9a9778] border-r-[#d4d0a8] border-b-[#d4d0a8] border-l-[#9a9778] bg-[#fffccc] px-2"
        />
        <span className="absolute top-[6px] left-[7px] h-4 border-l border-dotted border-black" />
      </div>
      <div className="mx-px flex w-[31px] items-center justify-center border-x border-black bg-[#52ceb0]">
        <button type="button" aria-label="Messages" className={creamBevel}>
          <svg viewBox="0 0 18 20" className="h-5 w-[18px]" fill="none" stroke="#000" shapeRendering="crispEdges">
            <path d="M.5.500h17v19H.5z" /><path d="M9 3v9M9 14v2" strokeWidth="2" />
          </svg>
        </button>
      </div>
      <output className="flex-1 self-center pt-px pl-1">&lt;M1&gt; - Select first corner</output>
      <div className="w-20 border-l-2 border-black bg-[#52ceb0] py-[2px] pr-[2px] pl-[6px]">
        <button type="button" className="flex h-full w-full items-center justify-between border-2 border-t-[#a8e8d8] border-r-[#2f6a5c] border-b-[#2f6a5c] border-l-[#a8e8d8] pt-px pr-[6px] pl-1 text-[15px]">
          Inch
          <span className="h-[7px] w-3 border-2 border-t-[#c4f0e6] border-r-[#2f6a5c] border-b-[#2f6a5c] border-l-[#c4f0e6]" />
        </button>
      </div>
    </form>
  );
}

function StatusBar() {
  return (
    <div className="relative h-[33px] shrink-0 border-t-2 border-r border-b-3 border-l-2 border-t-[#6f8f8f] border-r-[#e8ffff] border-b-[#d8f4f4] border-l-[#6f8f8f]">
      <div className="h-full border border-black bg-[#b2ffff] p-px">
        <p className={`h-full border-2 border-r-3 border-t-[#ccffff] border-r-[#6aa6a6] border-b-[#6aa6a6] border-l-[#ccffff] text-center text-xs/[22px] font-bold ${MONO}`}>
          cs,#18,Surface,XC=2.91335,YC=1.09945,Islands=1,Holes=0,POS
        </p>
      </div>
      <div className="absolute -top-[5px] right-[99px] flex h-[26px] w-[79px] items-center justify-between bg-[linear-gradient(#8b9296,#5d6669_45%,#3e484b_50%,#566064)] px-1">
        <svg viewBox="0 0 9 18" className="h-[18px] w-[9px]"><path d="M1.500 0v18M4.500 0v18M7.500 0v18" stroke="#22282a" strokeDasharray="2 2" /></svg>
        <svg viewBox="0 0 15 12" className="h-3 w-[15px]">
          <path d="M3 3q4-4 7-1" stroke="#ddd" fill="none" /><rect y="4" width="15" height="8" rx="1" fill="#e6e6e6" /><path d="M2 6.500h11M2 8.500h11" stroke="#666" strokeDasharray="1 1" /><path d="M4 10.500h7" stroke="#666" />
        </svg>
        <button aria-label="Help" className="mr-1 flex size-[15px] items-center justify-center rounded-full border border-white bg-[#1020b8] font-['Liberation_Sans',sans-serif] text-xs font-bold text-white">?</button>
        <svg viewBox="0 0 6 14" className="mr-px h-[14px] w-[6px]"><path d="M1 1h5v2H1zM0 10h6l-3 4z" fill="#fff" /></svg>
      </div>
    </div>
  );
}

export default function App() {
  return (
    <div className="flex h-screen flex-col overflow-hidden bg-black text-black">
      <TitleBar />
      <MenuArea />
      <main className="flex min-h-0 flex-1">
        <LeftPanel />
        <Board />
        <RightPanel />
      </main>
      <CommandBar />
      <StatusBar />
      <Taskbar />
    </div>
  );
}
